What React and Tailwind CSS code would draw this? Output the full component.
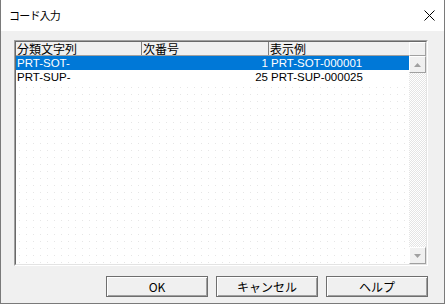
import React from 'react';

const rows = [
  { prefix: 'PRT-SOT-', next: 1, sample: 'PRT-SOT-000001', selected: true },
  { prefix: 'PRT-SUP-', next: 25, sample: 'PRT-SUP-000025', selected: false },
];

const ArrowButton = ({ up }) => (
  <div className="h-[17px] w-full bg-[#f0f0f0] border-t border-l border-white border-b border-r border-b-[#a0a0a0] border-r-[#a0a0a0] flex items-center justify-center">
    <svg width="7" height="4" viewBox="0 0 7 4">
      {up ? <polygon points="3.5,0 7,4 0,4" fill="#a0a0a0" /> : <polygon points="0,0 7,0 3.5,4" fill="#a0a0a0" />}
    </svg>
  </div>
);

const WinButton = ({ label }) => (
  <button className="w-[102px] h-[21px] bg-[#f0f0f0] border border-[#6e6e6e] shadow-[inset_1px_1px_0_#ffffff,inset_-1px_-1px_0_#a0a0a0] text-[12px] leading-none text-black">
    {label}
  </button>
);

const App = () => {
  return (
    <div
      className="w-[445px] h-[304px] flex flex-col bg-[#f0f0f0] border-x border-b border-[#7a7a7a] overflow-hidden text-black"
      style={{ fontFamily: '"Liberation Sans", "Noto Sans CJK JP", sans-serif' }}
    >
      {/* title bar */}
      <div className="h-[31px] bg-white flex items-center justify-between pl-[8px] pr-[9px] shrink-0">
        <span className="text-[11px] tracking-[-0.8px]" style={{ fontFamily: '"Noto Sans CJK JP", sans-serif' }}>
          コード入力
        </span>
        <svg width="11" height="11" viewBox="0 0 11 11">
          <path d="M0.5 0.5 L10.5 10.5 M10.5 0.5 L0.5 10.5" stroke="#000" strokeWidth="1" />
        </svg>
      </div>

      <div className="flex flex-col pt-[9px] pl-[13px] pr-[16px] pb-[6px]">
        {/* list box */}
        <div className="h-[226px] border-t border-l border-[#a0a0a0] border-b border-r border-b-white border-r-white">
          <div className="h-full flex border-t border-l border-[#696969] border-b border-r border-b-[#e3e3e3] border-r-[#e3e3e3]">
            <div className="flex-1 flex flex-col bg-white bg-[radial-gradient(circle,#e6e6e6_0.8px,transparent_0.9px)] bg-size-[7px_7px]">
              <div className="h-[14px] flex bg-[#f0f0f0] border-b border-[#a0a0a0] text-[12px] leading-[13px]" style={{ fontFamily: '"Noto Sans CJK JP", sans-serif' }}>
                <div className="w-[126px] border-r border-[#808080] pl-[1px]">分類文字列</div>
                <div className="w-[127px] border-r border-[#808080] pl-[1px]">次番号</div>
                <div className="flex-1 pl-[1px]">表示例</div>
              </div>
              {rows.map(r => (
                <div
                  key={r.prefix}
                  className={`h-[14px] flex text-[11.5px] leading-[14px] ${r.selected ? 'bg-[#0078d7] text-white' : 'bg-white text-black'}`}
                >
                  <div className="w-[126px] pl-[1px]">{r.prefix}</div>
                  <div className="w-[127px] text-right pr-[1px]">{r.next}</div>
                  <div className="flex-1 pl-[2px]">{r.sample}</div>
                </div>
              ))}
            </div>
            {/* scrollbar */}
            <div className="w-[17px] flex flex-col">
              <div className="h-[14px] bg-[#f0f0f0] border-b border-r border-[#a0a0a0] border-t border-l border-t-white border-l-white" />
              <ArrowButton up />
              <div className="flex-1 bg-[repeating-conic-gradient(#e4e4e4_0_25%,#ffffff_0_50%)] bg-size-[2px_2px]" />
              <ArrowButton />
            </div>
          </div>
        </div>

        {/* buttons */}
        <div className="mt-[10px] flex justify-end gap-[8px]" style={{ fontFamily: '"Noto Sans CJK JP", sans-serif' }}>
          <WinButton label="OK" />
          <WinButton label="キャンセル" />
          <WinButton label="ヘルプ" />
        </div>
      </div>
    </div>
  );
};

export default App;
